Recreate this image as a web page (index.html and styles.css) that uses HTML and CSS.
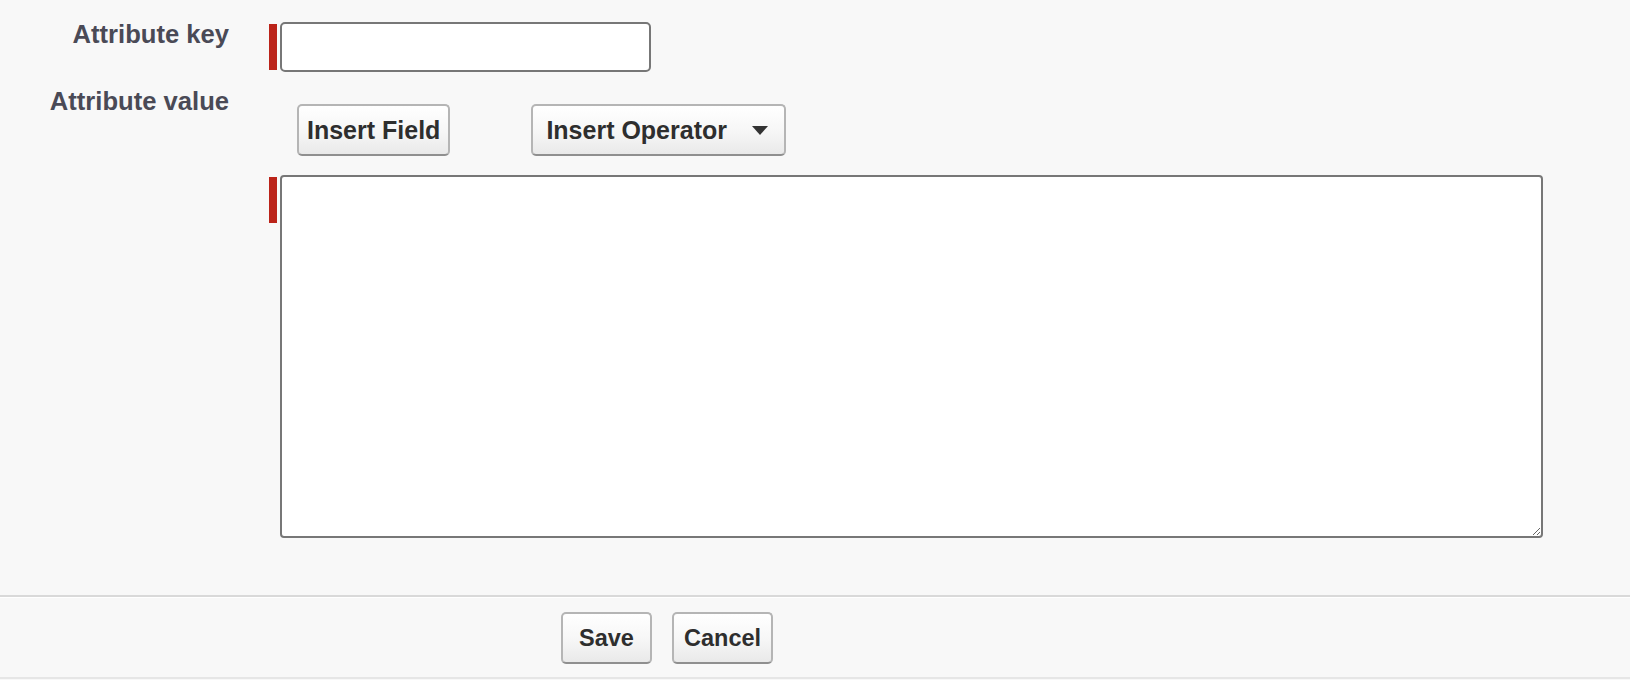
FILE: index.html
```html
<!DOCTYPE html>
<html lang="en">
<head>
<meta charset="utf-8">
<title>Attribute</title>
<link rel="stylesheet" href="styles.css">
</head>
<body>
<div class="page">
  <div class="form">
    <div class="row row-key">
      <label class="label" for="attr-key">Attribute key</label>
      <div class="field">
        <span class="req-bar"></span>
        <input id="attr-key" class="text-input" type="text">
      </div>
    </div>
    <div class="row row-value">
      <label class="label" for="attr-value">Attribute value</label>
      <div class="field-col">
        <div class="toolbar">
          <button class="btn btn-field" type="button">Insert Field</button>
          <button class="btn btn-operator" type="button">Insert Operator
            <svg class="caret" width="16" height="9" viewBox="0 0 16 9"><polygon points="0,0 16,0 8,9" fill="#333"/></svg>
          </button>
        </div>
        <div class="field area-field">
          <span class="req-bar"></span>
          <textarea id="attr-value" class="text-area"></textarea>
        </div>
      </div>
    </div>
  </div>
  <div class="footer">
    <button class="btn btn-footer" type="button">Save</button>
    <button class="btn btn-footer" type="button">Cancel</button>
  </div>
</div>
</body>
</html>
```

FILE: styles.css
```css
html, body {
  margin: 0;
  padding: 0;
  background: #f8f8f8;
}

body {
  font-family: "Liberation Sans", Arial, Helvetica, sans-serif;
  width: 1630px;
  height: 680px;
  overflow: hidden;
}

.page {
  display: flex;
  flex-direction: column;
}

.form {
  padding-top: 20px;
  display: flex;
  flex-direction: column;
  gap: 15px;
}

.row {
  display: grid;
  grid-template-columns: 229px 1fr;
  column-gap: 40px;
  align-items: start;
}

.label {
  font-size: 25.6px;
  line-height: 29px;
  font-weight: bold;
  color: #4a4a56;
  text-align: right;
  white-space: nowrap;
}

.field {
  display: flex;
  align-items: flex-start;
  gap: 3px;
}

.row-key .field {
  margin-top: 2px;
}

.req-bar {
  display: block;
  width: 8px;
  height: 46px;
  margin-top: 2px;
  background: #bb2319;
  flex: none;
}

.text-input {
  box-sizing: border-box;
  width: 371px;
  height: 50px;
  border: 2px solid #777;
  border-radius: 5px;
  background: #fff;
  margin: 0;
  padding: 4px 8px;
  font-size: 22px;
  font-family: inherit;
}

.field-col {
  display: flex;
  flex-direction: column;
}

.toolbar {
  display: flex;
  gap: 81px;
  margin-top: 17px;
  padding-left: 28px;
}

.btn {
  box-sizing: border-box;
  height: 52px;
  display: inline-flex;
  align-items: center;
  justify-content: center;
  margin: 0;
  font-family: "Liberation Sans", Arial, Helvetica, sans-serif;
  font-weight: bold;
  font-size: 25px;
  color: #2e2e2e;
  background: linear-gradient(to bottom, #ffffff 0%, #f6f6f6 55%, #e9e9e9 100%);
  border: 2px solid #b5b5b5;
  border-bottom-color: #8f8f8f;
  border-radius: 5px;
  white-space: nowrap;
  cursor: pointer;
}

.btn-field {
  padding: 0 8px;
}

.btn-operator {
  padding: 0 16px 0 13px;
  gap: 25px;
}

.caret {
  display: block;
  flex: none;
}

.area-field {
  margin-top: 19px;
}

.text-area {
  box-sizing: border-box;
  width: 1263px;
  height: 363px;
  border: 2px solid #777;
  border-radius: 4px;
  background: #fff;
  margin: 0;
  padding: 6px 8px;
  font-size: 22px;
  font-family: inherit;
  resize: both;
  display: block;
}

.footer {
  margin-top: 57px;
  border-top: 2px solid #d9d9d9;
  box-shadow: inset 0 1px 0 #ffffff;
  border-bottom: 2px solid #e6e6e6;
  padding: 15px 0 13px 561px;
  display: flex;
  gap: 20px;
}

.btn-footer {
  font-size: 23.5px;
  padding: 0 10px;
  min-width: 91px;
}
```
